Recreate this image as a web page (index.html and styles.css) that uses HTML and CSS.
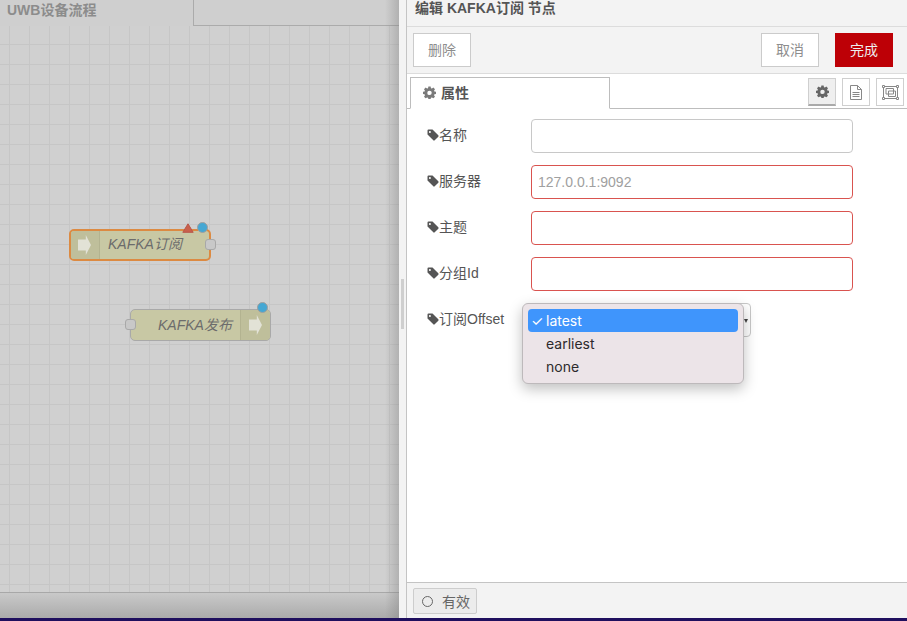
FILE: index.html
```html
<!DOCTYPE html>
<html>

<head>
    <meta charset="utf-8">
    <title>KAFKA</title>
    <link rel="stylesheet" href="styles.css">
</head>

<body>
    <svg class="defs" width="0" height="0">
        <symbol id="tag" viewBox="0 0 12 12">
            <path d="M0.5 1.5Q0.5 0.5 1.5 0.5H5.5L11.3 6.3Q12 7 11.3 7.7L7.7 11.3Q7 12 6.3 11.3L0.5 5.5Z M2.9 1.9A1 1 0 1 0 2.91 3.9A1 1 0 1 0 2.9 1.9Z" fill-rule="evenodd" />
        </symbol>
        <symbol id="cog" viewBox="0 0 14 14">
            <path d="M5.8 0.5H8.2L8.6 2.3L9.6 2.7L11.2 1.7L12.9 3.4L11.9 5L12.3 6L14 6.3V8.7L12.3 9L11.9 10L12.9 11.6L11.2 13.3L9.6 12.3L8.6 12.7L8.2 14H5.8L5.4 12.7L4.4 12.3L2.8 13.3L1.1 11.6L2.1 10L1.7 9L0 8.7V6.3L1.7 6L2.1 5L1.1 3.4L2.8 1.7L4.4 2.7L5.4 2.3Z M7 5A2.4 2.4 0 1 0 7.01 9.8A2.4 2.4 0 1 0 7 5Z" fill-rule="evenodd" />
        </symbol>
    </svg>

    <div class="app">
        <div class="workspace">
            <div class="ws-tabs">
                <div class="ws-tab">UWB设备流程</div>
                <div class="ws-tab-rest"></div>
            </div>
            <div class="canvas">
                <div class="node node-selected node-sub">
                    <div class="node-icon"><span class="arrow"></span></div>
                    <div class="node-label">KAFKA订阅</div>
                    <span class="port port-right"></span>
                    <svg class="warn" width="12" height="10" viewBox="0 0 12 10">
                        <path d="M6 0.8L11.2 9.3H0.8Z" fill="#c9604c" stroke="#b8574a" />
                    </svg>
                    <span class="dot"></span>
                </div>
                <div class="node node-pub">
                    <div class="node-label">KAFKA发布</div>
                    <div class="node-icon"><span class="arrow"></span></div>
                    <span class="port port-left"></span>
                    <span class="dot"></span>
                </div>
            </div>
            <div class="ws-footer"></div>
        </div>

        <div class="sash"><span class="grip"></span></div>

        <div class="tray">
            <div class="tray-title">编辑 KAFKA订阅 节点</div>
            <div class="tray-toolbar">
                <button class="btn">删除</button>
                <span class="spacer"></span>
                <button class="btn">取消</button>
                <button class="btn btn-primary">完成</button>
            </div>
            <div class="tab-row">
                <div class="tab">
                    <svg class="tab-cog" width="13" height="13"><use href="#cog" /></svg>
                    <span>属性</span>
                </div>
                <span class="spacer"></span>
                <div class="tab-tools">
                    <span class="tool tool-on"><svg width="13" height="13"><use href="#cog" /></svg></span>
                    <span class="tool">
                        <svg width="12" height="15" viewBox="0 0 12 15" fill="none" stroke="#888">
                            <path d="M0.5 0.5H7.5L11.5 4.5V14.5H0.5Z M7.5 0.5V4.5H11.5 M2.5 7.5H9.5 M2.5 9.5H9.5 M2.5 11.5H9.5" />
                        </svg>
                    </span>
                    <span class="tool">
                        <svg width="17" height="15" viewBox="0 0 17 15" fill="none" stroke="#888">
                            <path d="M1.5 1.5H15.5V13.5H1.5Z M4 3.5H11.5V9H4Z M6.5 6H13.5V11.5H6.5Z" />
                            <path d="M0.5 0.5H2.5V2.5H0.5Z M14.5 0.5H16.5V2.5H14.5Z M0.5 12.5H2.5V14.5H0.5Z M14.5 12.5H16.5V14.5H14.5Z" fill="#fff" />
                        </svg>
                    </span>
                </div>
            </div>

            <div class="form">
                <div class="form-row">
                    <label><svg class="tag" width="12" height="12"><use href="#tag" /></svg>名称</label>
                    <input class="field" type="text">
                </div>
                <div class="form-row">
                    <label><svg class="tag" width="12" height="12"><use href="#tag" /></svg>服务器</label>
                    <input class="field field-bad" type="text" placeholder="127.0.0.1:9092">
                </div>
                <div class="form-row">
                    <label><svg class="tag" width="12" height="12"><use href="#tag" /></svg>主题</label>
                    <input class="field field-bad" type="text">
                </div>
                <div class="form-row">
                    <label><svg class="tag" width="12" height="12"><use href="#tag" /></svg>分组Id</label>
                    <input class="field field-bad" type="text">
                </div>
                <div class="form-row">
                    <label><svg class="tag" width="12" height="12"><use href="#tag" /></svg>订阅Offset</label>
                    <div class="select-box">
                        <span class="select-arrow"></span>
                        <div class="menu">
                            <div class="menu-item menu-item-on"><span class="check">✓</span>latest</div>
                            <div class="menu-item">earliest</div>
                            <div class="menu-item">none</div>
                        </div>
                    </div>
                </div>
            </div>

            <div class="tray-footer">
                <div class="status"><span class="ring"></span>有效</div>
            </div>
        </div>
    </div>
    <div class="strip"></div>
</body>

</html>
```

FILE: styles.css
```css
html, body {
    height: 100%;
}

body {
    margin: 0;
    overflow: hidden;
    font-family: "Liberation Sans", "Noto Sans CJK SC", sans-serif;
    font-size: 14px;
    color: #555;
    background: #fff;
}

.defs {
    position: absolute;
}

.app {
    display: flex;
    height: 618px;
}

.strip {
    height: 3px;
    background: #1f0f5e;
}

.spacer {
    flex: 1;
}

/* left side, dimmed by the tray */
.workspace {
    width: 399px;
    display: flex;
    flex-direction: column;
    background: #cfcfcf;
    position: relative;
}

.workspace::after {
    content: "";
    position: absolute;
    top: 0;
    bottom: 0;
    right: 0;
    width: 14px;
    background: linear-gradient(to right, rgba(120, 120, 120, 0), rgba(120, 120, 120, 0.35));
}

.ws-tabs {
    height: 26px;
    display: flex;
    flex-shrink: 0;
}

.ws-tab {
    width: 193px;
    padding-left: 7px;
    box-sizing: border-box;
    font-size: 14px;
    font-weight: bold;
    line-height: 21px;
    color: #8c8c8c;
}

.ws-tab-rest {
    flex: 1;
    border-left: 1px solid #ababab;
    border-bottom: 1px solid #ababab;
}

.canvas {
    flex: 1;
    position: relative;
    overflow: hidden;
    background-color: #d0d0d0;
    background-image:
        linear-gradient(to right, #c6c6c6 1px, transparent 1px),
        linear-gradient(to bottom, #c6c6c6 1px, transparent 1px);
    background-size: 20px 20px;
    background-position: 9px -2px;
}

.ws-footer {
    height: 25px;
    flex-shrink: 0;
    border-top: 1px solid #a8a8a8;
    background: linear-gradient(to bottom, #c9c9c9, #ababab);
}

/* flow nodes */
.node {
    position: absolute;
    width: 139px;
    height: 30px;
    display: flex;
    background: #c8c8a4;
    border: 1px solid #a9a9a9;
    border-radius: 5px;
    box-sizing: content-box;
}

.node-sub {
    left: 69px;
    top: 203px;
    width: 138px;
    height: 28px;
    border: 2px solid #dc8a42;
}

.node-pub {
    left: 130px;
    top: 283px;
}

.node-icon {
    width: 30px;
    flex-shrink: 0;
    display: flex;
    align-items: center;
    justify-content: center;
    background: #bfbf9b;
}

.node-sub .node-icon {
    border-right: 1px solid #b3b390;
    border-radius: 3px 0 0 3px;
    width: 29px;
    justify-content: flex-start;
    padding-left: 7px;
    box-sizing: border-box;
}

.node-pub .node-icon {
    border-left: 1px solid #b3b390;
    border-radius: 0 4px 4px 0;
    box-sizing: border-box;
}

.arrow {
    width: 13px;
    height: 20px;
    background: #e2e2d6;
    clip-path: polygon(0 22%, 60% 22%, 60% 0, 100% 50%, 60% 100%, 60% 78%, 0 78%);
}

.node-label {
    flex: 1;
    font-size: 14px;
    font-style: italic;
    line-height: 27px;
    color: #6c6c6c;
    padding-left: 8px;
    white-space: nowrap;
}

.node-pub .node-label {
    padding-left: 27px;
    line-height: 30px;
}

.port {
    position: absolute;
    width: 9px;
    height: 9px;
    top: 9px;
    background: #c8c8c8;
    border: 1px solid #a8a8a8;
    border-radius: 3px;
}

.port-right {
    right: -7px;
    top: 8px;
}

.port-left {
    left: -6px;
    top: 9px;
}

.dot {
    position: absolute;
    width: 9px;
    height: 9px;
    top: -8px;
    right: 2px;
    background: #45a7d3;
    border: 1px solid #9f9f9f;
    border-radius: 50%;
}

.node-sub .dot {
    top: -9px;
    right: 1px;
}

.warn {
    position: absolute;
    top: -8px;
    right: 15px;
}

/* sash between workspace and tray */
.sash {
    width: 8px;
    flex-shrink: 0;
    background: #f3f3f3;
    border-right: 1px solid #c4c4c4;
    box-sizing: border-box;
    padding: 279px 0 0 2px;
}

.grip {
    display: block;
    width: 3px;
    height: 50px;
    background: #cfcfcf;
}

/* edit tray */
.tray {
    flex: 1;
    display: flex;
    flex-direction: column;
    position: relative;
    background: #fff;
}

.tray-title {
    height: 26px;
    padding-left: 8px;
    box-sizing: content-box;
    font-size: 14px;
    font-weight: bold;
    line-height: 16px;
    color: #555;
    background: #f3f3f3;
    border-bottom: 1px solid #dcdcdc;
}

.tray-toolbar {
    height: 46px;
    display: flex;
    align-items: center;
    gap: 16px;
    padding: 0 14px 0 6px;
    background: #f3f3f3;
    border-bottom: 1px solid #dcdcdc;
}

.btn {
    width: 58px;
    height: 34px;
    padding: 0 0 2px;
    font-family: inherit;
    font-size: 14px;
    color: #8d8d8d;
    background: #fff;
    border: 1px solid #cbcbcb;
}

.btn-primary {
    color: #eee;
    background: #bd0006;
    border-color: #bd0006;
}

.tab-row {
    height: 34px;
    display: flex;
    align-items: flex-end;
    padding: 0 3px;
    border-bottom: 1px solid #bdbdbd;
}

.tab {
    width: 200px;
    height: 32px;
    margin-bottom: -1px;
    display: flex;
    align-items: center;
    gap: 5px;
    padding: 0 0 2px 12px;
    box-sizing: border-box;
    font-size: 14px;
    font-weight: bold;
    color: #555;
    background: #fff;
    border: 1px solid #bdbdbd;
    border-bottom-color: #fff;
}

.tab-cog {
    fill: #7a7a7a;
}

.tab-tools {
    display: flex;
    gap: 6px;
    padding-bottom: 2px;
}

.tool {
    width: 28px;
    height: 28px;
    box-sizing: border-box;
    display: flex;
    align-items: center;
    justify-content: center;
    border: 1px solid #cfcfcf;
    background: #fff;
    fill: #666;
}

.tool-on {
    background: #efefef;
    border-bottom: 2px solid #aaa;
}

.form {
    flex: 1;
    padding-top: 10px;
    display: flex;
    flex-direction: column;
    gap: 12px;
}

.form-row {
    display: flex;
    align-items: flex-start;
    height: 34px;
    padding-left: 20px;
}

.form-row label {
    width: 104px;
    flex-shrink: 0;
    font-size: 14px;
    line-height: 33px;
    color: #555;
    white-space: nowrap;
}

.tag {
    fill: #555;
    vertical-align: -1px;
}

.field {
    width: 322px;
    height: 34px;
    padding: 0 6px;
    box-sizing: border-box;
    font-family: inherit;
    font-size: 14px;
    background: #fff;
    border: 1px solid #c8c8c8;
    border-radius: 4px;
    outline: none;
}

.field::placeholder {
    color: #a0a0a0;
}

.field-bad {
    border-color: #d9534f;
}

.select-box {
    width: 220px;
    height: 34px;
    box-sizing: border-box;
    position: relative;
    border: 1px solid #c8c8c8;
    border-radius: 4px;
}

.select-arrow {
    position: absolute;
    right: 2px;
    top: 15px;
    border-left: 2px solid transparent;
    border-right: 2px solid transparent;
    border-top: 4px solid #444;
}

/* open dropdown, sits over the select */
.menu {
    position: absolute;
    left: -10px;
    top: -1px;
    width: 222px;
    height: 81px;
    box-sizing: border-box;
    padding: 5px;
    font-family: Inter, "Liberation Sans", sans-serif;
    font-size: 14px;
    color: #2c2a2c;
    background: #ece4e8;
    border: 1px solid #bdb9bb;
    border-radius: 6px;
    box-shadow: 0 5px 14px rgba(0, 0, 0, 0.25);
}

.menu-item {
    height: 23px;
    line-height: 23px;
    padding-left: 18px;
    position: relative;
    border-radius: 4px;
}

.menu-item-on {
    color: #fff;
    background: #3f95fc;
}

.check {
    position: absolute;
    left: 3px;
    font-size: 14px;
}

.tray-footer {
    height: 36px;
    padding: 5px 6px 0;
    box-sizing: border-box;
    background: #f3f3f3;
    border-top: 1px solid #c4c4c4;
}

.status {
    width: 64px;
    height: 26px;
    box-sizing: border-box;
    display: flex;
    align-items: center;
    gap: 9px;
    padding-left: 8px;
    font-size: 14px;
    color: #666;
    background: #ececec;
    border: 1px solid #cdcdcd;
    border-radius: 2px;
}

.ring {
    width: 9px;
    height: 9px;
    border: 1px solid #666;
    border-radius: 50%;
}
```
